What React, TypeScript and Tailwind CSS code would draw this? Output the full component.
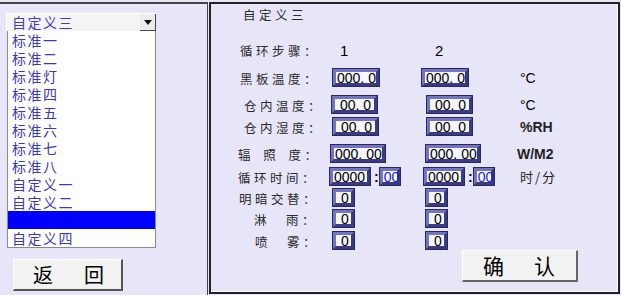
import React from 'react'

const cjk = "font-['Noto_Sans_CJK_SC',sans-serif]"
const lbl = `${cjk} text-[12.5px] tracking-[3.5px] text-[#2a2a2a] leading-[17px] whitespace-pre`
const num = "font-['Liberation_Sans',Arial,sans-serif] text-[14px] leading-[14px] whitespace-pre"

const listItems = ['标准一', '标准二', '标准灯', '标准四', '标准五', '标准六', '标准七', '标准八', '自定义一', '自定义二', '', '自定义四']

interface BoxProps {
    w: string
    text: string
    blue?: boolean
    className?: string
}

// 数値入力ボックス（立体枠）
const Box: React.FC<BoxProps> = ({ w, text, blue, className }) => (
    <div
        className={`${w} h-[17px] flex items-center pl-[1px] bg-[#f6f6fd] border-[3px] border-t-[#7474c4] border-l-[#7474c4] border-r-[#3a3a86] border-b-[#3a3a86] shadow-[0_0_0_1px_#28285c] overflow-visible ${className || ''}`}
    >
        <span className={`${num} ${blue ? 'text-[#2424c8]' : 'text-black'}`}>{text}</span>
    </div>
)

const App: React.FC = () => {
    return (
        <div className="w-[621px] h-[295px] bg-[#e6e6f8] flex pt-[2px] overflow-hidden">
            {/* 左側：プログラム選択 */}
            <div className="w-[208px] h-[293px] border-t-2 border-r border-[#444]">
                <div className="mt-[9px] ml-[6px] w-[150px] h-[18px] flex bg-[#f4f4f4] border-t border-l border-white">
                    <div className={`flex-1 pl-[5px] flex items-center ${cjk} text-[14px] tracking-[1.5px] text-[#3c3cc0] leading-[17px]`}>
                        自定义三
                    </div>
                    <div className="w-[16px] h-full bg-[#ececec] border-r border-b border-[#444] flex items-center justify-center">
                        <svg width="8" height="5" viewBox="0 0 8 5">
                            <path d="M0 0 H8 L4 5 Z" fill="#111" />
                        </svg>
                    </div>
                </div>
                <div className="ml-[7px] w-[149px] h-[217px] bg-white border-l border-r border-b border-[#8a8a8a]">
                    {listItems.map((item, i) => (
                        <div
                            key={i}
                            className={`h-[18px] pl-[4px] ${cjk} text-[14px] tracking-[1.5px] leading-[18px] ${i === 10 ? 'bg-[#0000ff]' : 'text-[#3a3ab8]'}`}
                        >
                            {item}
                        </div>
                    ))}
                </div>
                <button
                    type="button"
                    className="mt-[11px] ml-[13px] w-[110px] h-[32px] flex items-center pl-[19px] gap-[31px] bg-[#f2f2f2] border-t border-l border-white border-r-2 border-b-2 border-r-[#555] border-b-[#555]"
                >
                    <span className={`${cjk} text-[20px] leading-[24px] text-black`}>返</span>
                    <span className={`${cjk} text-[20px] leading-[24px] text-black`}>回</span>
                </button>
            </div>

            {/* 右側：設定パネル */}
            <div className="ml-[1px] w-[411px] h-[292px] border-2 border-[#222] shadow-[inset_-1px_-1px_0_#fff] flex flex-col">
                <div className="mt-[2px] h-[17px] flex items-center pl-[32px]">
                    <span className={lbl}>自定义三</span>
                </div>

                <div className="mt-[18px] h-[17px] flex items-center">
                    <div className="w-[122px] pl-[29px]"><span className={lbl}>循环步骤：</span></div>
                    <div className="w-[94px] pl-[7px]"><span className={`${num} text-[15px] text-black`}>1</span></div>
                    <div className="w-[93px] pl-[8px]"><span className={`${num} text-[15px] text-black`}>2</span></div>
                </div>

                <div className="mt-[11px] h-[17px] flex items-center">
                    <div className="w-[122px] pl-[29px]"><span className={lbl}>黑板温度：</span></div>
                    <div className="w-[94px]"><Box w="w-[46px]" text="000. 0" /></div>
                    <div className="w-[93px]"><Box w="w-[46px]" text="000. 0" className="-ml-[5px]" /></div>
                    <span className={`${num} text-black`}>°C</span>
                </div>

                <div className="mt-[10px] h-[17px] flex items-center">
                    <div className="w-[122px] pl-[33px]"><span className={lbl}>仓内温度：</span></div>
                    <div className="w-[94px]"><Box w="w-[45px]" text=" 00. 0" className="-ml-[1px]" /></div>
                    <div className="w-[93px]"><Box w="w-[45px]" text=" 00. 0" /></div>
                    <span className={`${num} text-black`}>°C</span>
                </div>

                <div className="mt-[5px] h-[17px] flex items-center">
                    <div className="w-[122px] pl-[33px]"><span className={lbl}>仓内湿度：</span></div>
                    <div className="w-[94px]"><Box w="w-[45px]" text=" 00. 0" /></div>
                    <div className="w-[93px]"><Box w="w-[45px]" text=" 00. 0" /></div>
                    <span className={`${num} text-[13px] font-bold text-[#222]`}>%RH</span>
                </div>

                <div className="mt-[10px] h-[17px] flex items-center">
                    <div className="w-[122px] pl-[27px]"><span className={`${lbl} [word-spacing:3px]`}>辐 照 度：</span></div>
                    <div className="w-[94px]"><Box w="w-[54px]" text="000. 00" className="-ml-[2px]" /></div>
                    <div className="w-[93px]"><Box w="w-[54px]" text="000. 00" className="-ml-[1px]" /></div>
                    <span className={`${num} text-[13px] font-bold text-[#222] -ml-[3px]`}>W/M2</span>
                </div>

                <div className="mt-[6px] h-[17px] flex items-center">
                    <div className="w-[122px] pl-[27px]"><span className={lbl}>循环时间：</span></div>
                    <div className="w-[94px] flex items-center">
                        <Box w="w-[40px]" text="0000" className="-ml-[3px]" />
                        <span className={`${num} text-black ml-[4px] mr-[1px] font-bold`}>:</span>
                        <Box w="w-[20px]" text="00" blue />
                    </div>
                    <div className="w-[93px] flex items-center">
                        <Box w="w-[40px]" text="0000" className="-ml-[3px]" />
                        <span className={`${num} text-black ml-[4px] mr-[1px] font-bold`}>:</span>
                        <Box w="w-[20px]" text="00" blue />
                    </div>
                    <span className={`${cjk} text-[13px] tracking-[2px] text-[#222] leading-[17px]`}>时/分</span>
                </div>

                <div className="mt-[4px] h-[17px] flex items-center">
                    <div className="w-[122px] pl-[28px]"><span className={lbl}>明暗交替：</span></div>
                    <div className="w-[94px]"><Box w="w-[21px]" text=" 0" /></div>
                    <div className="w-[93px]"><Box w="w-[21px]" text=" 0" className="-ml-[1px]" /></div>
                </div>

                <div className="mt-[4px] h-[17px] flex items-center">
                    <div className="w-[122px] pl-[43px]"><span className={lbl}>淋　雨：</span></div>
                    <div className="w-[94px]"><Box w="w-[21px]" text=" 0" /></div>
                    <div className="w-[93px]"><Box w="w-[21px]" text=" 0" className="-ml-[1px]" /></div>
                </div>

                <div className="mt-[5px] h-[17px] flex items-center">
                    <div className="w-[122px] pl-[44px]"><span className={lbl}>喷　雾：</span></div>
                    <div className="w-[94px]"><Box w="w-[21px]" text=" 0" /></div>
                    <div className="w-[93px]"><Box w="w-[21px]" text=" 0" className="-ml-[1px]" /></div>
                </div>

                <button
                    type="button"
                    className="mt-[1px] ml-[251px] w-[116px] h-[32px] flex items-center pl-[20px] gap-[30px] bg-[#f2f2f2] border-t border-l border-white border-r-2 border-b-2 border-r-[#666] border-b-[#666]"
                >
                    <span className={`${cjk} text-[21px] leading-[25px] text-black`}>确</span>
                    <span className={`${cjk} text-[21px] leading-[25px] text-black`}>认</span>
                </button>
            </div>
        </div>
    )
}

export default App
